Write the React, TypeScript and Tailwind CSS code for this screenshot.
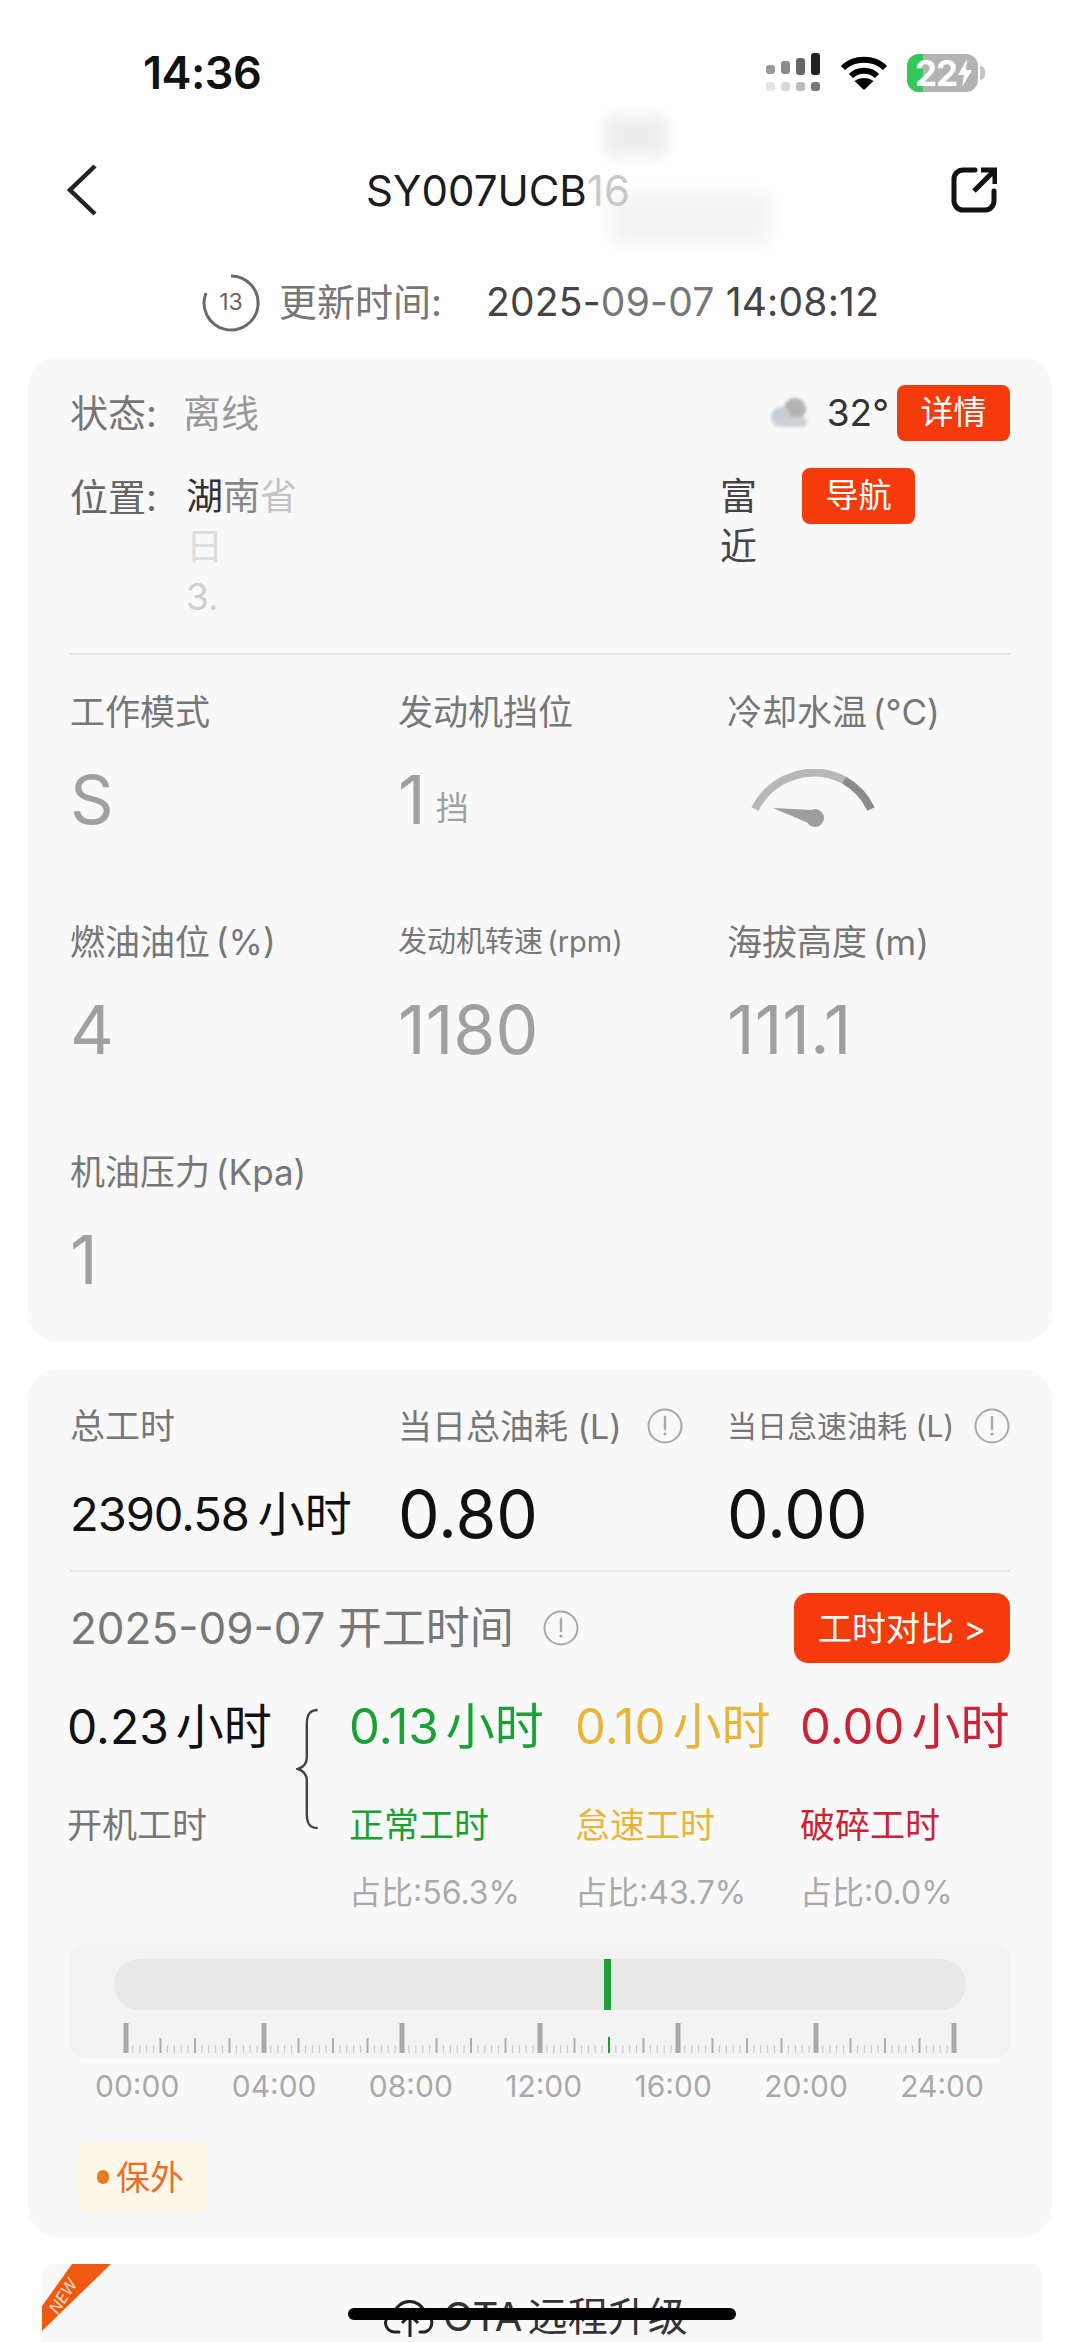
const InfoIcon = ({ size = 36 }: { size?: number }) => (
  <svg width={size} height={size} viewBox="0 0 36 36" fill="none" className="shrink-0">
    <circle cx="18" cy="18" r="16.5" stroke="#a8a8a8" strokeWidth="2" />
    <path d="M18 9v12" stroke="#a8a8a8" strokeWidth="2.4" strokeLinecap="round" />
    <circle cx="18" cy="26" r="1.6" fill="#a8a8a8" />
  </svg>
);

const Gauge = () => (
  <svg width="130" height="60" viewBox="750 766 130 60" fill="none" className="ml-[21px]">
    <path d="M757 806A66 66 0 0 1 846 777" stroke="#b8b8b8" strokeWidth="8" />
    <path d="M846 777A66 66 0 0 1 873 806" stroke="#8c8c8c" strokeWidth="8" />
    <path d="M775 805L815 807L815 822Z" fill="#9d9d9d" />
    <circle cx="817" cy="815" r="9" fill="#9d9d9d" />
  </svg>
);

const Ruler = () => {
  const step = 828 / 120;
  const ticks = Array.from({ length: 121 }, (_, i) => i);
  return (
    <svg width="836" height="30" viewBox="0 0 836 30" className="ml-[53px] mt-[13px] block">
      {ticks.map((i) => {
        const x = 3 + i * step;
        if (i === 70) return <line key={i} x1={x} x2={x} y1={14} y2={30} stroke="#1aa133" strokeWidth="2" />;
        if (i % 20 === 0) return <line key={i} x1={x} x2={x} y1={0} y2={30} stroke="#a9a9a9" strokeWidth="5" />;
        if (i % 5 === 0) return <line key={i} x1={x} x2={x} y1={15} y2={30} stroke="#adadad" strokeWidth="2" />;
        return <line key={i} x1={x} x2={x} y1={22} y2={30} stroke="#c4c4c4" strokeWidth="1" />;
      })}
    </svg>
  );
};

const Metric = ({ label, small, children }: { label: string; small?: boolean; children: React.ReactNode }) => (
  <div>
    <div className={`h-[44px] leading-[44px] whitespace-nowrap text-[#777] [word-spacing:-4px] ${small ? "text-[29px]" : "text-[35px]"}`}>{label}</div>
    <div className="mt-[27px] h-[76px] flex items-center text-[68px] leading-none text-[#a0a0a0]">{children}</div>
  </div>
);

const workTypes = [
  { hours: "0.13", name: "正常工时", ratio: "占比:56.3%", color: "text-[#1aa133]", width: "w-[226px]" },
  { hours: "0.10", name: "怠速工时", ratio: "占比:43.7%", color: "text-[#e8b53a]", width: "w-[225px]" },
  { hours: "0.00", name: "破碎工时", ratio: "占比:0.0%", color: "text-[#cc2233]", width: "w-[210px]" },
];

const times = ["00:00", "04:00", "08:00", "12:00", "16:00", "20:00", "24:00"];

export default function App() {
  return (
    <div className="relative w-[1080px] h-[2342px] overflow-hidden bg-white font-[family-name:Inter,'Noto_Sans_CJK_SC',sans-serif]">
      {/* status bar */}
      <div className="h-[146px] flex items-center pl-[143px] pr-[95px]">
        <span className="text-[45px] font-semibold text-[#111] tracking-[-0.5px]">14:36</span>
        <div className="ml-auto flex items-center">
          <svg width="56" height="40" viewBox="0 0 56 40" className="blur-[0.6px]">
            <rect x="1" y="12" width="9" height="9" rx="3" fill="#9a9a9a" />
            <rect x="16" y="8" width="9" height="13" rx="3" fill="#8a8a8a" />
            <rect x="31" y="5" width="9" height="17" rx="3" fill="#666" />
            <rect x="46" y="0" width="9" height="22" rx="3" fill="#222" />
            <rect x="1" y="29" width="9" height="9" rx="3" fill="#e4e4e4" />
            <rect x="16" y="29" width="9" height="9" rx="3" fill="#d8d8d8" />
            <rect x="31" y="29" width="9" height="9" rx="3" fill="#bbb" />
            <rect x="46" y="29" width="9" height="9" rx="3" fill="#777" />
          </svg>
          <svg width="48" height="36" viewBox="0 0 48 36" fill="none" className="ml-[19px]">
            <path d="M3 13C14 2 34 2 45 13" stroke="#000" strokeWidth="6" />
            <path d="M11 21C18 14 30 14 37 21" stroke="#000" strokeWidth="6" />
            <path d="M24 35L14.5 26C20 22 28 22 33.5 26Z" fill="#000" />
          </svg>
          <div className="relative ml-[19px] w-[71px] h-[38px] rounded-[12px] bg-[#b3b3b3] flex items-center pl-[8px]">
            <div className="absolute left-0 top-0 bottom-0 w-[16px] rounded-l-[12px] bg-[#34c759]" />
            <span className="relative text-[35px] font-bold text-white leading-none tracking-[-1px]">22</span>
            <svg width="16" height="30" viewBox="0 0 16 30" className="relative">
              <path d="M10 1L1 17H7L5 29L15 12H9Z" fill="#fff" />
            </svg>
          </div>
          <div className="ml-[2px] w-[5px] h-[14px] rounded-r-full bg-[#c4c4c4]" />
        </div>
      </div>

      {/* nav */}
      <div className="relative h-[88px] flex items-center pl-[67px] pr-[83px]">
        {/* smudged-out part of the plate number */}
        <div className="absolute left-[606px] top-[-30px] w-[60px] h-[40px] bg-[#ededed] blur-[8px]" />
        <div className="absolute left-[610px] top-[46px] w-[160px] h-[52px] bg-[#f3f3f3] blur-[10px]" />
        <svg width="30" height="52" viewBox="0 0 30 52" fill="none" className="relative">
          <path d="M28 2L3 26L28 50" stroke="#222" strokeWidth="4.5" />
        </svg>
        <div className="relative ml-[269px] text-[42px] text-[#1c1c1c] whitespace-nowrap">
          SY007UCB<span className="text-[#c9c9c9]">16</span>
        </div>
        <svg width="46" height="46" viewBox="0 0 46 46" fill="none" className="relative ml-auto">
          <path d="M24 3H12A9 9 0 0 0 3 12V34A9 9 0 0 0 12 43H34A9 9 0 0 0 43 34V24" stroke="#111" strokeWidth="5" strokeLinecap="round" />
          <path d="M23 24L43 4M30 3H44V17" stroke="#111" strokeWidth="5" />
        </svg>
      </div>

      {/* update time */}
      <div className="h-[123px] pt-[14px] pl-[201px] flex items-center">
        <div className="relative w-[60px] h-[60px] flex items-center justify-center">
          <svg width="60" height="60" viewBox="0 0 60 60" fill="none" className="absolute inset-0">
            <path d="M30 3A27 27 0 1 1 5 20" stroke="#6b6b6b" strokeWidth="3" />
          </svg>
          <span className="text-[23px] text-[#666]">13</span>
        </div>
        <span className="ml-[18px] w-[207px] text-[38px] text-[#777] whitespace-nowrap">更新时间:</span>
        <span className="text-[39px] text-[#444] whitespace-nowrap tracking-[0.2px]">
          2025-<span className="text-[#777]">09-07</span> 14:08:12
        </span>
      </div>

      {/* vehicle card */}
      <div className="mx-[28px] h-[985px] rounded-[30px] bg-[#f9f9f9] pt-[28px] pl-[42px] pr-[42px]">
        <div className="h-[56px] flex items-center">
          <span className="w-[113px] text-[38px] text-[#777] whitespace-nowrap">状态:</span>
          <span className="text-[38px] text-[#999]">离线</span>
          <svg width="46" height="32" viewBox="0 0 46 32" className="ml-auto blur-[1.5px]">
            <circle cx="28" cy="12" r="11" fill="#b4b4b4" />
            <circle cx="14" cy="20" r="10" fill="#c4ccd4" />
            <rect x="6" y="20" width="34" height="10" rx="5" fill="#ccd2d8" />
          </svg>
          <span className="ml-[14px] text-[37px] text-[#333]">32°</span>
          <button className="ml-[8px] w-[113px] h-[56px] rounded-[8px] bg-[#f53a0c] text-[33px] text-white">详情</button>
        </div>

        <div className="mt-[27px] flex items-start">
          <span className="w-[116px] pt-[4px] leading-[50px] text-[38px] text-[#666] whitespace-nowrap">位置:</span>
          <div className="w-[571px] pt-[4px] text-[37px] leading-[50px]">
            <div className="flex justify-between">
              <span>
                <span className="text-[#333]">湖</span>
                <span className="text-[#888]">南</span>
                <span className="text-[#c4c4c4]">省</span>
              </span>
              <span className="text-[#444]">富</span>
            </div>
            <div className="flex justify-between">
              <span className="text-[#dcdcdc]">日</span>
              <span className="text-[#444]">近</span>
            </div>
            <div className="text-[#cfcfcf]">3.</div>
          </div>
          <button className="ml-[45px] w-[113px] h-[56px] rounded-[8px] bg-[#f53a0c] text-[33px] text-white">导航</button>
        </div>

        <div className="mt-[31px] h-[2px] bg-[#e6e6e6]" />

        <div className="mt-[35px] grid grid-cols-[328px_329px_1fr] gap-y-[83px]">
          <Metric label="工作模式">S</Metric>
          <Metric label="发动机挡位">
            1<span className="ml-[10px] mt-[18px] text-[33px] text-[#a0a0a0]">挡</span>
          </Metric>
          <Metric label="冷却水温 (°C)">
            <Gauge />
          </Metric>
          <Metric label="燃油油位 (%)">4</Metric>
          <Metric label="发动机转速 (rpm)" small>1180</Metric>
          <Metric label="海拔高度 (m)">111.1</Metric>
          <Metric label="机油压力 (Kpa)">1</Metric>
        </div>
      </div>

      {/* work hours card */}
      <div className="mx-[28px] mt-[27px] h-[868px] rounded-[30px] bg-[#f9f9f9] pt-[35px] pl-[42px] pr-[42px]">
        <div className="grid grid-cols-[328px_329px_1fr]">
          <div className="h-[44px] leading-[44px] text-[35px] text-[#777]">总工时</div>
          <div className="h-[44px] flex items-center text-[34px] text-[#777] whitespace-nowrap">
            当日总油耗 (L)
            <span className="ml-auto mr-[44px]"><InfoIcon /></span>
          </div>
          <div className="h-[44px] flex items-center text-[30px] text-[#777] whitespace-nowrap">
            当日怠速油耗 (L)
            <span className="ml-auto"><InfoIcon /></span>
          </div>
          <div className="mt-[31px] h-[70px] flex items-center text-[#111] text-[47px] whitespace-nowrap">
            <span className="tracking-[-1px]">2390.58</span>
            <span className="ml-[9px]">小时</span>
          </div>
          <div className="mt-[31px] h-[70px] flex items-center text-[66px] text-[#111]">0.80</div>
          <div className="mt-[31px] h-[70px] flex items-center text-[66px] text-[#111]">0.00</div>
        </div>

        <div className="mt-[21px] h-[2px] bg-[#e6e6e6]" />

        <div className="mt-[21px] h-[70px] flex items-center">
          <span className="text-[44px] text-[#777] whitespace-nowrap">2025-09-07 开工时间</span>
          <span className="ml-[29px]"><InfoIcon /></span>
          <button className="ml-auto w-[216px] h-[70px] rounded-[14px] bg-[#f53a0c] text-[34px] text-white whitespace-nowrap">工时对比 &gt;</button>
        </div>

        <div className="mt-[34px] -ml-[3px] flex items-start">
          <div className="w-[233px]">
            <div className="h-[60px] flex items-center text-[48px] text-[#111] whitespace-nowrap">0.23<span className="ml-[7px]">小时</span></div>
            <div className="mt-[46px] h-[44px] leading-[44px] text-[35px] text-[#777]">开机工时</div>
          </div>
          <svg width="24" height="124" viewBox="0 0 24 124" fill="none" className="mt-[10px]">
            <path d="M22 2C13 2 11 8 11 16V50C11 56 8 60 2 62C8 64 11 68 11 74V108C11 116 13 122 22 122" stroke="#444" strokeWidth="2.5" />
          </svg>
          <div className="ml-[29px] flex">
            {workTypes.map((w) => (
              <div key={w.name} className={w.width}>
                <div className={`h-[60px] flex items-center text-[49px] whitespace-nowrap ${w.color}`}>{w.hours}<span className="ml-[7px]">小时</span></div>
                <div className={`mt-[46px] h-[44px] leading-[44px] text-[35px] ${w.color}`}>{w.name}</div>
                <div className="mt-[24px] h-[44px] leading-[44px] text-[32px] text-[#aaa] whitespace-nowrap">{w.ratio}</div>
              </div>
            ))}
          </div>
        </div>

        {/* timeline */}
        <div className="mt-[29px] h-[114px] rounded-[14px] bg-[#f3f3f3] pt-[15px]">
          <div className="relative mx-[44px] h-[51px] rounded-[25px] bg-[#e8e8e8]">
            <div className="absolute left-[490px] top-0 bottom-0 w-[7px] bg-[#1aa133]" />
          </div>
          <Ruler />
        </div>
        <div className="mt-[8px] ml-[25px] mr-[26px] h-[40px] flex justify-between items-center text-[30px] text-[#aaa]">
          {times.map((t) => (
            <span key={t}>{t}</span>
          ))}
        </div>

        <div className="mt-[36px] ml-[8px] w-[130px] h-[70px] rounded-[10px] bg-[#fff8e8] flex items-center pl-[19px]">
          <span className="w-[12px] h-[14px] rounded-full bg-[#ea7a22]" />
          <span className="ml-[7px] text-[34px] text-[#e5702a]">保外</span>
        </div>
      </div>

      {/* OTA card */}
      <div className="relative mx-[42px] mt-[27px] h-[106px] w-[1000px] bg-[#f9f9f9] rounded-[10px] flex items-center pl-[342px]">
        <svg width="52" height="42" viewBox="0 0 52 42" fill="none">
          <path d="M15 36H11A9 9 0 0 1 10 18A16 16 0 0 1 41 17A10 10 0 0 1 41 36H36" stroke="#222" strokeWidth="3" strokeLinecap="round" />
          <path d="M26 41V20M18 27L26 19L34 27" stroke="#222" strokeWidth="3" />
        </svg>
        <span className="ml-[7px] text-[40px] text-[#333] whitespace-nowrap [word-spacing:-6px]">OTA 远程升级</span>
        <svg width="70" height="68" viewBox="0 0 70 68" className="absolute left-0 top-0">
          <path d="M30 0H69L0 67V42Z" fill="#f05a10" />
        </svg>
        <span className="absolute left-[2px] top-[20px] text-[16px] italic text-white/80 -rotate-[57deg]">NEW</span>
      </div>

      {/* home indicator */}
      <div className="absolute left-[348px] top-[2308px] w-[388px] h-[12px] rounded-full bg-black" />
    </div>
  );
}
